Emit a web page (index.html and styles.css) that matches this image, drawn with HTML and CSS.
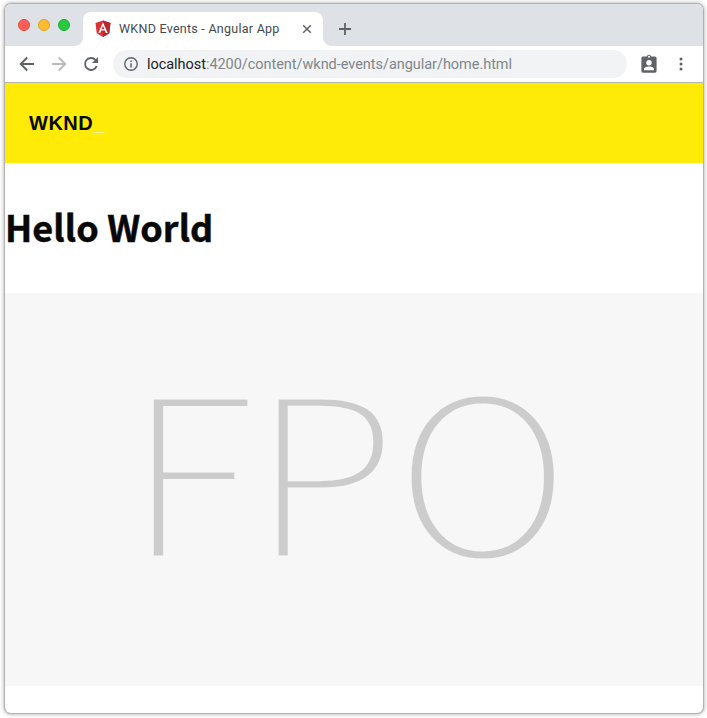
FILE: index.html
```html
<!DOCTYPE html>
<html lang="en">
<head>
<meta charset="utf-8">
<title>WKND Events - Angular App</title>
<link rel="stylesheet" href="styles.css">
</head>
<body>
<div class="window">
  <div class="tabstrip">
    <div class="lights"><i class="light close"></i><i class="light minimize"></i><i class="light expand"></i></div>
    <div class="tab">
      <svg class="favicon" width="16" height="18" viewBox="0 0 16 18"><path fill="#dd3035" d="M8 .5 15.5 3 14.3 13.3 8 17 1.7 13.3.5 3z"/><path fill="#b92830" d="M8 .5 15.5 3 14.3 13.3 8 17z"/><path fill="#fff" fill-rule="evenodd" d="M8 2.3 12.7 13h-1.9l-.9-2.4H6.1L5.200 13H3.300zM8 6 6.700 9h2.600z"/></svg>
      <span class="tab-title">WKND Events - Angular App</span>
      <svg class="tab-close" width="10" height="10" viewBox="0 0 10 10"><path d="m1.200 1.200 7.600 7.600m0-7.600L1.200 8.800" stroke="#5f6368" stroke-width="1.500"/></svg>
    </div>
    <svg class="new-tab" width="12" height="12" viewBox="0 0 12 12"><path d="M6 0v12M0 6h12" stroke="#5f6368" stroke-width="1.800"/></svg>
  </div>
  <div class="toolbar">
    <svg class="nav" width="16" height="16" viewBox="0 0 16 16"><path d="M15 8H2M8.200 1.500 1.700 8l6.500 6.500" fill="none" stroke="#5f6368" stroke-width="1.900"/></svg>
    <svg class="nav" width="16" height="16" viewBox="0 0 16 16"><path d="M1 8h13M7.800 1.500 14.300 8l-6.500 6.500" fill="none" stroke="#babcbe" stroke-width="1.900"/></svg>
    <svg class="nav" width="16" height="16" viewBox="0 0 16 16"><path d="M13.700 10A6 6 0 1 1 12.400 3.800L13.500 5" fill="none" stroke="#5f6368" stroke-width="1.900"/><path d="M15 1v6H9z" fill="#5f6368"/></svg>
    <div class="address">
      <svg width="14" height="14" viewBox="0 0 14 14"><circle cx="7" cy="7" r="6.200" fill="none" stroke="#5f6368" stroke-width="1.400"/><path d="M7 6.200v4.300M7 3.500V5" stroke="#5f6368" stroke-width="1.500"/></svg>
      <span class="url"><b>localhost</b>:4200/content/wknd-events/angular/home.html</span>
    </div>
    <svg class="profile" width="16" height="19" viewBox="0 0 16 19"><path fill="#5f6368" fill-rule="evenodd" d="M2 2.500h3.700a2.400 2.400 0 0 1 4.600 0H14a1.600 1.600 0 0 1 1.600 1.600v13A1.600 1.600 0 0 1 14 18.700H2A1.600 1.600 0 0 1 .4 17.100v-13A1.600 1.600 0 0 1 2 2.500zM8 1.700a1 1 0 1 0 0 2 1 1 0 0 0 0-2zM8 6a2.700 2.700 0 1 0 0 5.400A2.700 2.700 0 0 0 8 6zM3 16.300h10v-1.200c0-1.800-3.400-2.600-5-2.600s-5 .8-5 2.600z"/></svg>
    <svg class="menu" width="4" height="14" viewBox="0 0 4 14"><g fill="#5f6368"><circle cx="2" cy="2" r="1.500"/><circle cx="2" cy="7" r="1.500"/><circle cx="2" cy="12" r="1.500"/></g></svg>
  </div>
  <header class="site-header"><span class="logo">WKND<span class="cursor">_</span></span></header>
  <main>
    <h1>Hello World</h1>
    <svg class="placeholder" width="698" height="393" viewBox="0 0 698 393">
      <text transform="translate(119.900 264.700) scale(1.114 1)">F</text>
      <text transform="translate(245.600 264.700) scale(1.088 1)">P</text>
      <text transform="translate(477.700 265.200) scale(1.104 1)" text-anchor="middle">O</text>
    </svg>
  </main>
</div>
</body>
</html>
```
FILE: styles.css
```css
* { box-sizing: border-box; }
body { margin: 0; height: 718px; padding: 4px 4px 0 5px; background: #fff; font-family: Roboto, sans-serif; }
svg { display: block; flex: none; }
.window { width: 698px; height: 709px; border-radius: 6px; overflow: hidden; background: #fff; box-shadow: 0 0 0 1px #b2b2b2, 0 0 4px 1px rgba(0,0,0,.35); }
.tabstrip { display: flex; height: 42px; background: #dee1e6; padding: 8px 0 0 13px; }
.lights { display: flex; gap: 8px; width: 65px; padding-top: 7px; }
.light { width: 12px; height: 12px; border-radius: 50%; border: 1px solid; }
.close { background: #ff5f57; border-color: #e2463f; }
.minimize { background: #ffbd2e; border-color: #dfa023; }
.expand { background: #28c940; border-color: #1aac2c; }
.tab { position: relative; display: flex; align-items: center; width: 240px; height: 34px; padding: 0 11px 0 12px; background: #fff; border-radius: 8px 8px 0 0; }
.tab::before, .tab::after { content: ""; position: absolute; bottom: 0; width: 8px; height: 8px; }
.tab::before { left: -8px; background: radial-gradient(circle at 0 0, transparent 7.500px, #fff 8px); }
.tab::after { right: -8px; background: radial-gradient(circle at 100% 0, transparent 7.500px, #fff 8px); }
.tab-title { margin-left: 8px; font-size: 12.500px; letter-spacing: .26px; line-height: 14px; padding-bottom: 1px; color: #45494d; white-space: nowrap; }
.tab-close { margin-left: auto; margin-right: -4px; transform: translateX(-4px); }
.new-tab { margin: 11px 0 0 16px; }
.toolbar { display: flex; align-items: center; height: 37px; padding-left: 14px; border-bottom: 1px solid #b6b4b0; }
.nav { margin-right: 16px; }
.address { display: flex; align-items: center; width: 514px; height: 28px; margin-left: -2px; padding-left: 11px; border-radius: 14px; background: #f1f3f4; }
.url { margin-left: 9px; font-size: 14.500px; letter-spacing: -.04px; color: #80868b; white-space: nowrap; }
.url b { font-weight: 400; color: #202124; }
.profile { margin: 0 0 2px 14px; }
.menu { margin-left: 22.400px; }
.site-header { display: flex; align-items: center; height: 80px; padding-left: 24px; background: #ffea08; }
.logo { font: bold 20px "Liberation Sans", sans-serif; letter-spacing: .5px; color: #080808; }
.cursor { color: #fff6a0; }
h1 { height: 130px; margin: 0; font: bold 36px/127px "Noto Sans CJK JP", sans-serif; letter-spacing: .1px; -webkit-text-stroke: .5px #080808; color: #080808; white-space: nowrap; }
.placeholder { background: #f7f7f7; }
/* the outline in the background colour slims the letter strokes */
.placeholder text { font: 200 221px "Noto Sans CJK JP", sans-serif; fill: #ccc; stroke: #f7f7f7; stroke-width: 4.800; }
```
